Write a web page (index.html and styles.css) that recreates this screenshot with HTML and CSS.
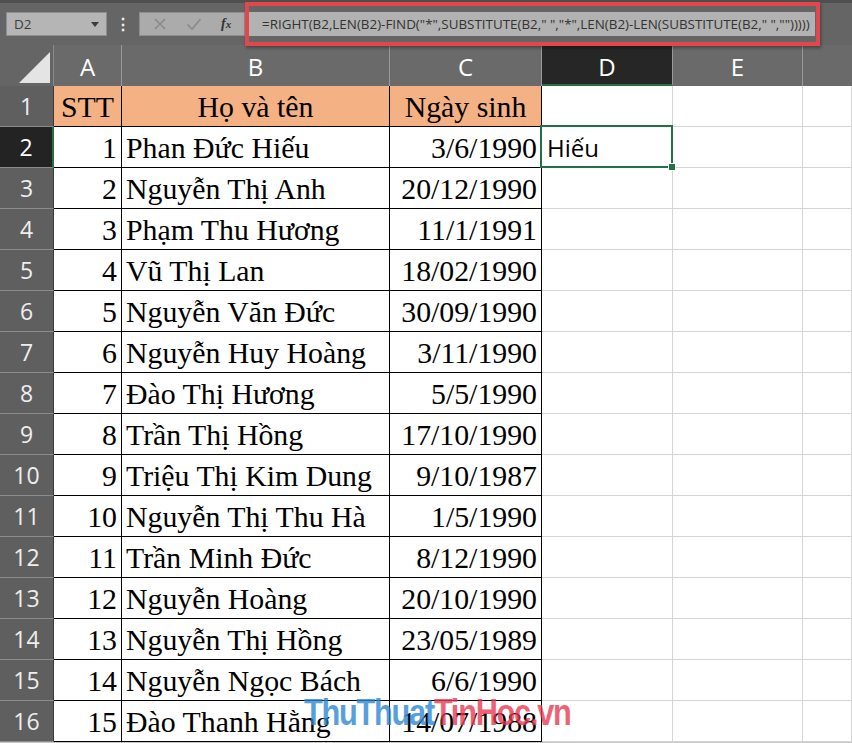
FILE: index.html
```html
<!DOCTYPE html>
<html>
<head>
<meta charset="utf-8">
<link rel="stylesheet" href="styles.css">
</head>
<body>
<div class="app">
  <div class="toolbar">
    <div class="namebox"><span>D2</span><span class="dd"></span></div>
    <div class="vdots">⋮</div>
    <div class="fxicons">
      <svg class="ico" width="14" height="14" viewBox="0 0 14 14"><path d="M2 2L12 12M12 2L2 12" stroke="#8a8a8a" stroke-width="1.6" fill="none"/></svg>
      <svg class="ico" width="16" height="14" viewBox="0 0 16 14"><path d="M1.5 7.5L6 12L14.5 2" stroke="#8a8a8a" stroke-width="1.6" fill="none"/></svg>
      <span class="fx">f<span class="fxx">x</span></span>
    </div>
    <div class="formula">=RIGHT(B2,LEN(B2)-FIND("*",SUBSTITUTE(B2," ","*",LEN(B2)-LEN(SUBSTITUTE(B2," ","")))))</div>
    <div class="redbox"></div>
  </div>
  <div class="sheet">
    <div class="corner"><span class="tri"></span></div>
    <div class="ch">A</div><div class="ch">B</div><div class="ch">C</div><div class="ch sel">D</div><div class="ch">E</div><div class="ch last"></div>

    <div class="rh">1</div><div class="t hd">STT</div><div class="t hd">Họ và tên</div><div class="t hd">Ngày sinh</div><div class="c"></div><div class="c"></div><div class="c"></div>
    <div class="rh sel">2</div><div class="t num">1</div><div class="t name">Phan Đức Hiếu</div><div class="t num">3/6/1990</div><div class="c active">Hiếu</div><div class="c"></div><div class="c"></div>
    <div class="rh">3</div><div class="t num">2</div><div class="t name">Nguyễn Thị Anh</div><div class="t num">20/12/1990</div><div class="c"></div><div class="c"></div><div class="c"></div>
    <div class="rh">4</div><div class="t num">3</div><div class="t name">Phạm Thu Hương</div><div class="t num">11/1/1991</div><div class="c"></div><div class="c"></div><div class="c"></div>
    <div class="rh">5</div><div class="t num">4</div><div class="t name">Vũ Thị Lan</div><div class="t num">18/02/1990</div><div class="c"></div><div class="c"></div><div class="c"></div>
    <div class="rh">6</div><div class="t num">5</div><div class="t name">Nguyễn Văn Đức</div><div class="t num">30/09/1990</div><div class="c"></div><div class="c"></div><div class="c"></div>
    <div class="rh">7</div><div class="t num">6</div><div class="t name">Nguyễn Huy Hoàng</div><div class="t num">3/11/1990</div><div class="c"></div><div class="c"></div><div class="c"></div>
    <div class="rh">8</div><div class="t num">7</div><div class="t name">Đào Thị Hương</div><div class="t num">5/5/1990</div><div class="c"></div><div class="c"></div><div class="c"></div>
    <div class="rh">9</div><div class="t num">8</div><div class="t name">Trần Thị Hồng</div><div class="t num">17/10/1990</div><div class="c"></div><div class="c"></div><div class="c"></div>
    <div class="rh">10</div><div class="t num">9</div><div class="t name">Triệu Thị Kim Dung</div><div class="t num">9/10/1987</div><div class="c"></div><div class="c"></div><div class="c"></div>
    <div class="rh">11</div><div class="t num">10</div><div class="t name">Nguyễn Thị Thu Hà</div><div class="t num">1/5/1990</div><div class="c"></div><div class="c"></div><div class="c"></div>
    <div class="rh">12</div><div class="t num">11</div><div class="t name">Trần Minh Đức</div><div class="t num">8/12/1990</div><div class="c"></div><div class="c"></div><div class="c"></div>
    <div class="rh">13</div><div class="t num">12</div><div class="t name">Nguyễn Hoàng</div><div class="t num">20/10/1990</div><div class="c"></div><div class="c"></div><div class="c"></div>
    <div class="rh">14</div><div class="t num">13</div><div class="t name">Nguyễn Thị Hồng</div><div class="t num">23/05/1989</div><div class="c"></div><div class="c"></div><div class="c"></div>
    <div class="rh">15</div><div class="t num">14</div><div class="t name">Nguyễn Ngọc Bách</div><div class="t num">6/6/1990</div><div class="c"></div><div class="c"></div><div class="c"></div>
    <div class="rh">16</div><div class="t num">15</div><div class="t name">Đào Thanh Hằng</div><div class="t num">14/07/1988</div><div class="c"></div><div class="c"></div><div class="c"></div>
  </div>
  <div class="watermark"><span class="wb">ThuThuat</span><span class="wr">TinHoc.vn</span></div>
</div>
</body>
</html>
```
FILE: styles.css
```css
* { box-sizing: border-box; }
html, body { margin: 0; padding: 0; }
body { width: 852px; height: 743px; overflow: hidden; background: #fff; }
.app { position: relative; width: 852px; height: 743px; }

.toolbar {
  position: relative;
  height: 45px;
  background: #656565;
  border-top: 3px solid #4f4f4f;
  display: flex;
  align-items: flex-start;
  padding-top: 9px;
  font-family: "Open Sans", "Noto Sans", sans-serif;
}
.namebox {
  margin-left: 6px;
  width: 101px;
  height: 24px;
  background: #b5b5b5;
  border: 1px solid #8e8e8e;
  display: flex;
  align-items: center;
  justify-content: space-between;
  padding: 0 7px 0 7px;
  font-size: 13.5px;
  color: #3c3c3c;
}
.dd {
  width: 0; height: 0;
  border-left: 4px solid transparent;
  border-right: 4px solid transparent;
  border-top: 5px solid #3c3c3c;
}
.vdots {
  width: 32px;
  text-align: center;
  color: #f0f0f0;
  font-size: 16px;
  font-weight: bold;
  line-height: 24px;
}
.fxicons {
  width: 106px;
  height: 24px;
  background: #ababab;
  border: 1px solid #8e8e8e;
  display: flex;
  align-items: center;
  padding-left: 13px;
  gap: 0;
}
.ico { display: block; }
.ico:first-child { margin-right: 19px; }
.ico:nth-child(2) { margin-right: 19px; }
.fx {
  font-family: "Liberation Serif", serif;
  font-style: italic;
  font-weight: bold;
  font-size: 14px;
  color: #333;
}
.fxx { font-size: 11px; }
.formula {
  margin-left: 4px;
  width: 566px;
  height: 24px;
  background: #b2b2b2;
  color: #333;
  font-size: 13.4px;
  line-height: 24px;
  padding-left: 13px;
  white-space: nowrap;
  overflow: hidden;
}
.redbox {
  position: absolute;
  left: 245px;
  top: -1px;
  width: 575px;
  height: 44px;
  border: 4px solid #e2474d;
  box-shadow: 1px 2px 3px rgba(0,0,0,0.35);
}

.sheet {
  display: grid;
  grid-template-columns: 54px 68px 268px 152px 131px 130px 49px;
  grid-auto-rows: 41px;
  border-bottom: 1px solid #c8c8c8;
}
.corner {
  background: #656565;
  border-right: 1px solid #8a8a8a;
  position: relative;
}
.tri {
  position: absolute;
  right: 3px;
  bottom: 3px;
  width: 0; height: 0;
  border-left: 31px solid transparent;
  border-bottom: 31px solid #e4e4e4;
}
.ch {
  background: #6a6a6a;
  color: #fff;
  font-family: "Open Sans", "Noto Sans", sans-serif;
  font-size: 24px;
  display: flex;
  align-items: center;
  justify-content: center;
  border-right: 1px solid #9a9a9a;
  padding-top: 2px;
}
.ch.sel { background: #262626; border-bottom: 2px solid #217346; padding-top: 4px; }
.ch.last { border-right: none; }
.rh {
  background: #5f5f5f;
  color: #eeeeee;
  font-family: "Open Sans", "Noto Sans", sans-serif;
  font-size: 23px;
  display: flex;
  align-items: center;
  justify-content: center;
  border-bottom: 1px solid #8c8c8c;
  border-right: 1px solid #3a3a3a;
}
.rh.sel { background: #232323; color: #fff; border-right: 2px solid #217346; }

.t, .c {
  font-family: "Liberation Serif", "Times New Roman", serif;
  font-size: 29.8px;
  line-height: 41px;
  color: #000;
  white-space: nowrap;
  overflow: hidden;
}
.t {
  border-right: 1px solid #000;
  border-bottom: 1px solid #000;
}
.c {
  border-right: 1px solid #d4d4d4;
  border-bottom: 1px solid #d4d4d4;
  background: #fff;
}
.hd { background: #f4b183; text-align: center; }
.num { text-align: right; padding-right: 4px; }
.name { text-align: left; padding-left: 4px; }

.active {
  position: relative;
  overflow: visible;
  font-family: "Open Sans", "Noto Sans", sans-serif;
  font-size: 24px;
  padding-left: 5px;
  line-height: 42px;
}
.active::after {
  content: "";
  position: absolute;
  left: -2px; top: -2px; right: -1px; bottom: -1px;
  border: 2px solid #217346;
}
.active::before {
  content: "";
  position: absolute;
  right: -4px; bottom: -4px;
  width: 6px; height: 6px;
  background: #217346;
  border: 1px solid #fff;
  z-index: 2;
}

.watermark {
  position: absolute;
  left: 304px;
  top: 692px;
  font-family: "Liberation Sans", Arial, sans-serif;
  font-weight: bold;
  font-size: 37px;
  letter-spacing: -1.5px;
  transform: scaleX(0.83);
  transform-origin: left top;
  white-space: nowrap;
  opacity: 0.78;
}
.wb { color: #2a86d4; }
.wr { color: #e8384f; }
```
